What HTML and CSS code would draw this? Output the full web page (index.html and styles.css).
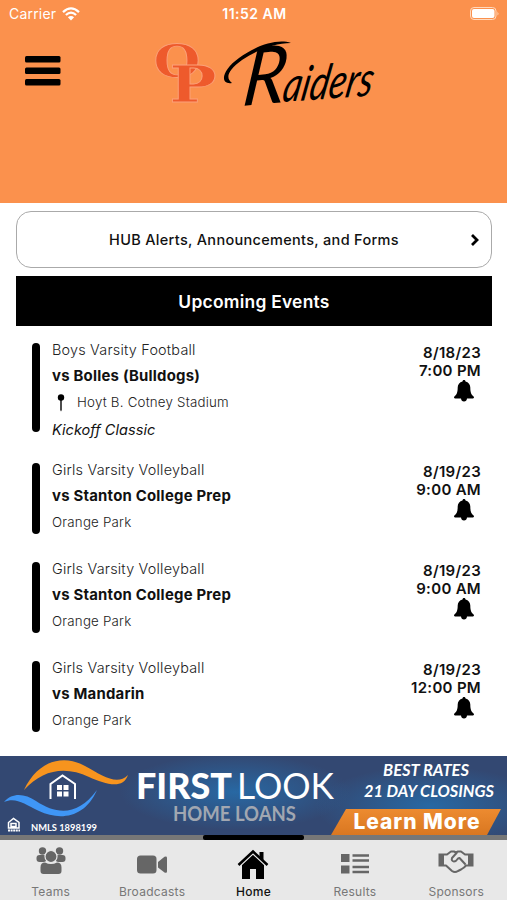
FILE: index.html
```html
<!DOCTYPE html>
<html lang="en">
<head>
    <meta charset="UTF-8">
    <meta name="viewport" content="width=device-width, initial-scale=1.0">
    <title>Raiders</title>
    <link rel="stylesheet" href="styles.css">
</head>
<body>
<svg class="defs" width="0" height="0">
  <symbol id="bell" viewBox="0 0 20 22">
    <path d="M10 0c1 0 1.500.700 1.500 1.600 3 .700 4.800 3 4.800 6 0 5 1 7.200 3.300 8.800.700.700.400 2.100-.600 2.100h-6c-.200 2-1.200 3-3 3s-2.800-1-3-3H1c-1 0-1.300-1.400-.600-2.100C2.700 14.800 3.700 12.600 3.700 7.600c0-3 1.800-5.300 4.800-6C8.500.7 9 0 10 0z"/>
  </symbol>
</svg>

<header class="header">
  <div class="status">
    <div class="carrier">
      <span class="carrier-name">Carrier</span>
      <svg width="18" height="14" viewBox="0 0 18 14" fill="none" stroke="#fff" stroke-width="2.300">
        <path d="M1 5.100Q9-2.300 17 5.100M3.900 8Q9 3.300 14.100 8"/>
        <path d="M9 13.500 5.900 10.200Q9 7.600 12.100 10.200Z" fill="#fff" stroke="none"/>
      </svg>
    </div>
    <span class="clock">11:52 AM</span>
    <svg class="battery" width="30" height="13" viewBox="0 0 30 13">
      <rect x=".5" y=".5" width="25.500" height="12" rx="3.500" fill="none" stroke="#ffd9bd"/>
      <rect x="2" y="2" width="22.500" height="9" rx="2" fill="#fff"/>
      <path d="M27.500 4.500q1.800 2 0 4z" fill="#ffd9bd"/>
    </svg>
  </div>
  <div class="brand">
    <svg class="menu" width="36" height="30" viewBox="0 0 36 30">
      <rect y="0" width="35.500" height="6.500" rx="1.500"/>
      <rect y="11.500" width="35.500" height="6.500" rx="1.500"/>
      <rect y="23" width="35.500" height="6.500" rx="1.500"/>
    </svg>
    <svg class="logo" width="230" height="80" viewBox="150 35 230 80">
      <g class="monogram">
        <text x="153.500" y="77" font-size="44" textLength="47" lengthAdjust="spacingAndGlyphs">O</text>
        <text x="169.500" y="101.500" font-size="51" textLength="47" lengthAdjust="spacingAndGlyphs">P</text>
      </g>
      <path d="M232 83C219 85 222 70 239 58C254 47 276 38 291 43C275 43 257 50 242 60C228 70 225 78 232 83Z"/>
      <g class="script">
        <text transform="translate(241 106) rotate(-5) skewX(-12)" font-size="80" textLength="43" lengthAdjust="spacingAndGlyphs">R</text>
        <text transform="translate(281 102) rotate(-4) skewX(-15)" font-size="48" textLength="90" lengthAdjust="spacingAndGlyphs">aiders</text>
      </g>
    </svg>
  </div>
</header>

<main class="content">
  <a class="alerts">
    <span>HUB Alerts, Announcements, and Forms</span>
    <svg class="chevron" width="10" height="14" viewBox="0 0 10 14"><path d="M2 2l5 5-5 5" fill="none" stroke="#000" stroke-width="2.800"/></svg>
  </a>
  <h2 class="title">Upcoming Events</h2>

  <div class="events">
    <div class="event event-long">
      <div class="bar"></div>
      <div class="info">
        <div class="sport">Boys Varsity Football</div>
        <div class="opponent">vs Bolles (Bulldogs)</div>
        <div class="place">
          <svg class="pin" width="8" height="18" viewBox="0 0 8 18"><circle cx="4" cy="3.500" r="3.200"/><path d="M3.300 6h1.400v10L4 17.500 3.300 16z"/></svg>
          <span>Hoyt B. Cotney Stadium</span>
        </div>
        <div class="note">Kickoff Classic</div>
      </div>
      <div class="when">
        <div>8/18/23</div>
        <div>7:00 PM</div>
        <svg class="bell" width="20" height="22"><use href="#bell"/></svg>
      </div>
    </div>
    <div class="event">
      <div class="bar"></div>
      <div class="info">
        <div class="sport">Girls Varsity Volleyball</div>
        <div class="opponent">vs Stanton College Prep</div>
        <div class="place">Orange Park</div>
      </div>
      <div class="when">
        <div>8/19/23</div>
        <div>9:00 AM</div>
        <svg class="bell" width="20" height="22"><use href="#bell"/></svg>
      </div>
    </div>
    <div class="event">
      <div class="bar"></div>
      <div class="info">
        <div class="sport">Girls Varsity Volleyball</div>
        <div class="opponent">vs Stanton College Prep</div>
        <div class="place">Orange Park</div>
      </div>
      <div class="when">
        <div>8/19/23</div>
        <div>9:00 AM</div>
        <svg class="bell" width="20" height="22"><use href="#bell"/></svg>
      </div>
    </div>
    <div class="event">
      <div class="bar"></div>
      <div class="info">
        <div class="sport">Girls Varsity Volleyball</div>
        <div class="opponent">vs Mandarin</div>
        <div class="place">Orange Park</div>
      </div>
      <div class="when">
        <div>8/19/23</div>
        <div>12:00 PM</div>
        <svg class="bell" width="20" height="22"><use href="#bell"/></svg>
      </div>
    </div>
  </div>
</main>

<!-- sponsor banner -->
<svg class="banner" width="507" height="79" viewBox="0 756 507 79">
  <defs>
    <radialGradient id="glow"><stop offset="0" stop-color="#2868a3"/><stop offset="1" stop-color="#2868a3" stop-opacity="0"/></radialGradient>
    <linearGradient id="cta" x2="0" y2="1"><stop offset="0" stop-color="#ed8b30"/><stop offset="1" stop-color="#d97721"/></linearGradient>
  </defs>
  <rect y="756" width="507" height="79" fill="#334872"/>
  <ellipse cx="235" cy="792" rx="115" ry="38" fill="url(#glow)"/>
  <ellipse cx="430" cy="806" rx="115" ry="40" fill="url(#glow)"/>
  <path d="M24 790C38 760 64 754 85 766C103 776 117 786 128 775C123 790 105 784 89 777C66 766 43 769 24 790Z" fill="#f7941e"/>
  <path d="M4 802C13 792 25 794 36 801C57 815 78 816 97 790C85 818 60 821 39 811C24 804 16 797 4 802Z" fill="#3f96f6"/>
  <path d="M50.500 799V784L62.500 775.500 75 784V799" fill="none" stroke="#fff" stroke-width="2"/>
  <path d="M57 785h5v5h-5zM63.500 785h5v5h-5zM57 791.500h5v5h-5zM63.500 791.500h5v5h-5z" fill="#fff"/>
  <path d="M8.500 828V822.500L13.500 818.500 19 822.500V828ZM11 823.500h5v3h-5z" fill="none" stroke="#fff" stroke-width="1.500"/>
  <path d="M8 830.500h12" stroke="#fff" stroke-width="2" stroke-dasharray="2 .6"/>
  <g font-family="Lato, sans-serif" fill="#fff">
    <text x="31" y="831" font-size="9.500" font-weight="700" textLength="66" lengthAdjust="spacingAndGlyphs">NMLS 1898199</text>
    <text x="136" y="799" font-size="36.500" font-weight="900" textLength="96" lengthAdjust="spacingAndGlyphs">FIRST</text>
    <text x="237" y="799" font-size="36.500" font-weight="400" textLength="97" lengthAdjust="spacingAndGlyphs">LOOK</text>
    <text x="173" y="821" font-size="20" font-weight="700" fill="#a1a7b1" textLength="123" lengthAdjust="spacingAndGlyphs">HOME LOANS</text>
    <text x="383" y="776" font-size="17" font-weight="700" font-style="italic" textLength="86" lengthAdjust="spacingAndGlyphs">BEST RATES</text>
    <text x="364" y="797" font-size="17" font-weight="700" font-style="italic" textLength="130" lengthAdjust="spacingAndGlyphs">21 DAY CLOSINGS</text>
  </g>
  <path d="M346 809H501L487 835H331Z" fill="url(#cta)"/>
  <text class="cta" x="353.500" y="829" font-size="21" textLength="126">Learn More</text>
</svg>

<nav class="tabs">
  <a class="tab">
    <svg width="30" height="28" viewBox="0 0 30 28">
      <circle cx="6.500" cy="4" r="3.700"/><circle cx="23.500" cy="4" r="3.700"/>
      <rect x=".5" y="8" width="10" height="7" rx="3"/><rect x="19.500" y="8" width="10" height="7" rx="3"/>
      <circle class="ring" cx="15" cy="9.500" r="6"/>
      <path d="M4.500 24v-3.500q0-5 4.500-5 6 3 12 0 4.500 0 4.500 5V24q0 3-3 3h-15q-3 0-3-3z"/>
    </svg>
    <span>Teams</span>
  </a>
  <a class="tab">
    <svg width="30" height="28" viewBox="0 0 30 28">
      <rect x="0" y="8.500" width="19.500" height="18" rx="3.500"/>
      <path d="M21 15l6.500-5.200Q30 9 30 11v13.500q0 2-2.500 1L21 20.500z"/>
    </svg>
    <span>Broadcasts</span>
  </a>
  <a class="tab active">
    <svg width="32" height="31" viewBox="0 0 32 31">
      <path d="M5 16.500 16 6l11 10.500V31h-8v-10h-6v10H5z"/>
      <path d="M1.500 17 16 3.500 30.500 17" fill="none" stroke="#e8e8e8" stroke-width="5"/>
      <path d="M1.500 17 16 3.500 30.500 17" fill="none" stroke="#000" stroke-width="2.500"/>
      <path d="M22.500 4h4v9.500l-4-3.700z"/>
    </svg>
    <span>Home</span>
  </a>
  <a class="tab">
    <svg width="28" height="28" viewBox="0 0 28 28">
      <path d="M0 7h8.500v8H0zM0 18.500h8.500v8H0z"/>
      <path d="M11.500 8.500H28M11.500 13.500H28M11.500 20H28M11.500 25H28" stroke="#666" stroke-width="2.600"/>
    </svg>
    <span>Results</span>
  </a>
  <a class="tab">
    <svg width="36" height="28" viewBox="0 0 36 28">
      <path d="M.5 6.500h5.500v13H.5zM30 6.500h5.500v13H30z"/>
      <path d="M6 7.500h3l4-3h3l2 1 2-1h3l4 3h3M6 18.500h2l6 5.500q3 2 6 0l3-1.500 3-2 2-2h2M19 5.500l-5 5.500q-1 3 2 3.500 2 0 4-3l1.500-.500 6 6.500" fill="none" stroke="#666" stroke-width="2" stroke-linejoin="round"/>
    </svg>
    <span>Sponsors</span>
  </a>
</nav>
</body>
</html>
```
FILE: styles.css
```css
* {
  box-sizing: border-box;
}

body {
  margin: 0;
  width: 507px;
  height: 900px;
  overflow: hidden;
  display: flex;
  flex-direction: column;
  background: #fff;
  color: #111;
  font-family: Inter, sans-serif;
}

svg {
  display: block;
  flex: none;
}

.defs {
  position: absolute;
}

.header {
  height: 203px;
  flex: none;
  background: #fb914d;
}

.status {
  display: grid;
  grid-template-columns: 1fr auto 1fr;
  align-items: center;
  height: 27px;
  padding: 0 7px 0 9px;
  color: #fff;
  font-size: 14px;
}

.carrier {
  display: flex;
  align-items: center;
  gap: 6px;
}

.carrier-name {
  letter-spacing: 0.2px;
}

.clock {
  font-weight: 600;
  letter-spacing: 0.5px;
}

.battery {
  justify-self: end;
}

.brand {
  display: flex;
  padding: 8px 0 0 25px;
}

.menu {
  margin-top: 21px;
}

.logo {
  margin-left: 89px;
  overflow: visible;
}

.monogram {
  font-family: "DejaVu Serif", serif;
  font-weight: 700;
  fill: #ee5a2c;
  stroke: #fba078;
  stroke-width: 0.8px;
}

.script {
  font-family: Lato, sans-serif;
  font-style: italic;
  font-weight: 400;
}

.content {
  height: 553px;
  flex: none;
  padding: 8px 15px 0 16px;
}

.alerts {
  display: grid;
  grid-template-columns: 20px 1fr 20px;
  align-items: center;
  height: 57px;
  padding: 0 11px;
  border: 1.5px solid #aaa;
  border-radius: 15px;
  font-size: 14.5px;
  font-weight: 500;
  letter-spacing: 0.31px;
  text-align: center;
}

.alerts span {
  grid-column: 2;
}

.chevron {
  justify-self: end;
}

.title {
  margin: 8px 0 0;
  height: 50px;
  line-height: 51px;
  background: #000;
  color: #fff;
  font-size: 17.4px;
  font-weight: 600;
  letter-spacing: 0.26px;
  text-align: center;
}

.events {
  padding: 11px 11px 0 16px;
}

.event {
  display: flex;
  height: 99px;
  line-height: 26px;
}

.event-long {
  height: 120px;
}

.bar {
  width: 8px;
  height: 71px;
  margin-top: 6px;
  border-radius: 4px;
  background: #000;
}

.event-long .bar {
  height: 89px;
}

.info {
  flex: 1;
  padding-left: 12px;
}

.sport {
  color: #222;
  font-size: 14.4px;
  font-weight: 300;
  letter-spacing: 0.21px;
}

.opponent {
  font-size: 14.9px;
  font-weight: 700;
  letter-spacing: 0.23px;
  line-height: 27px;
  height: 26px;
}

.place {
  display: flex;
  align-items: center;
  height: 26px;
  color: #222;
  font-size: 13.3px;
  font-weight: 300;
  letter-spacing: 0.22px;
}

.pin {
  margin: 2px 12px 0 5px;
}

.note {
  font-size: 14.5px;
  font-style: italic;
  line-height: 29px;
  letter-spacing: 0.05px;
}

.when {
  padding-top: 6px;
  font-size: 15px;
  font-weight: 600;
  line-height: 18px;
  letter-spacing: 0.3px;
  text-align: right;
}

.event-long .when {
  padding-top: 7px;
}

.bell {
  margin: 0 7px 0 auto;
}

.banner {
  width: 507px;
}

.cta {
  font-family: Inter, sans-serif;
  font-weight: 800;
  fill: #fff;
}

.tabs {
  position: relative;
  display: grid;
  grid-template-columns: repeat(5, 1fr);
  flex: 1;
  border-top: 5px solid #777;
  background: #e8e8e8;
}

.tab {
  display: flex;
  flex-direction: column;
  align-items: center;
  justify-content: flex-end;
  color: #777;
  fill: #666;
  font-size: 12px;
  line-height: 16px;
  letter-spacing: 0.25px;
}

.tab span {
  margin-top: 9px;
}

.active span {
  margin-top: 5px;
}

.ring {
  stroke: #e8e8e8;
  stroke-width: 1.2px;
}

.active {
  color: #111;
  fill: #000;
  font-weight: 500;
}

/* indicator over the top border of the active tab */
.active::before {
  content: "";
  position: absolute;
  top: -5px;
  width: 101px;
  height: 5px;
  border-radius: 2px;
  background: #000;
}
```
